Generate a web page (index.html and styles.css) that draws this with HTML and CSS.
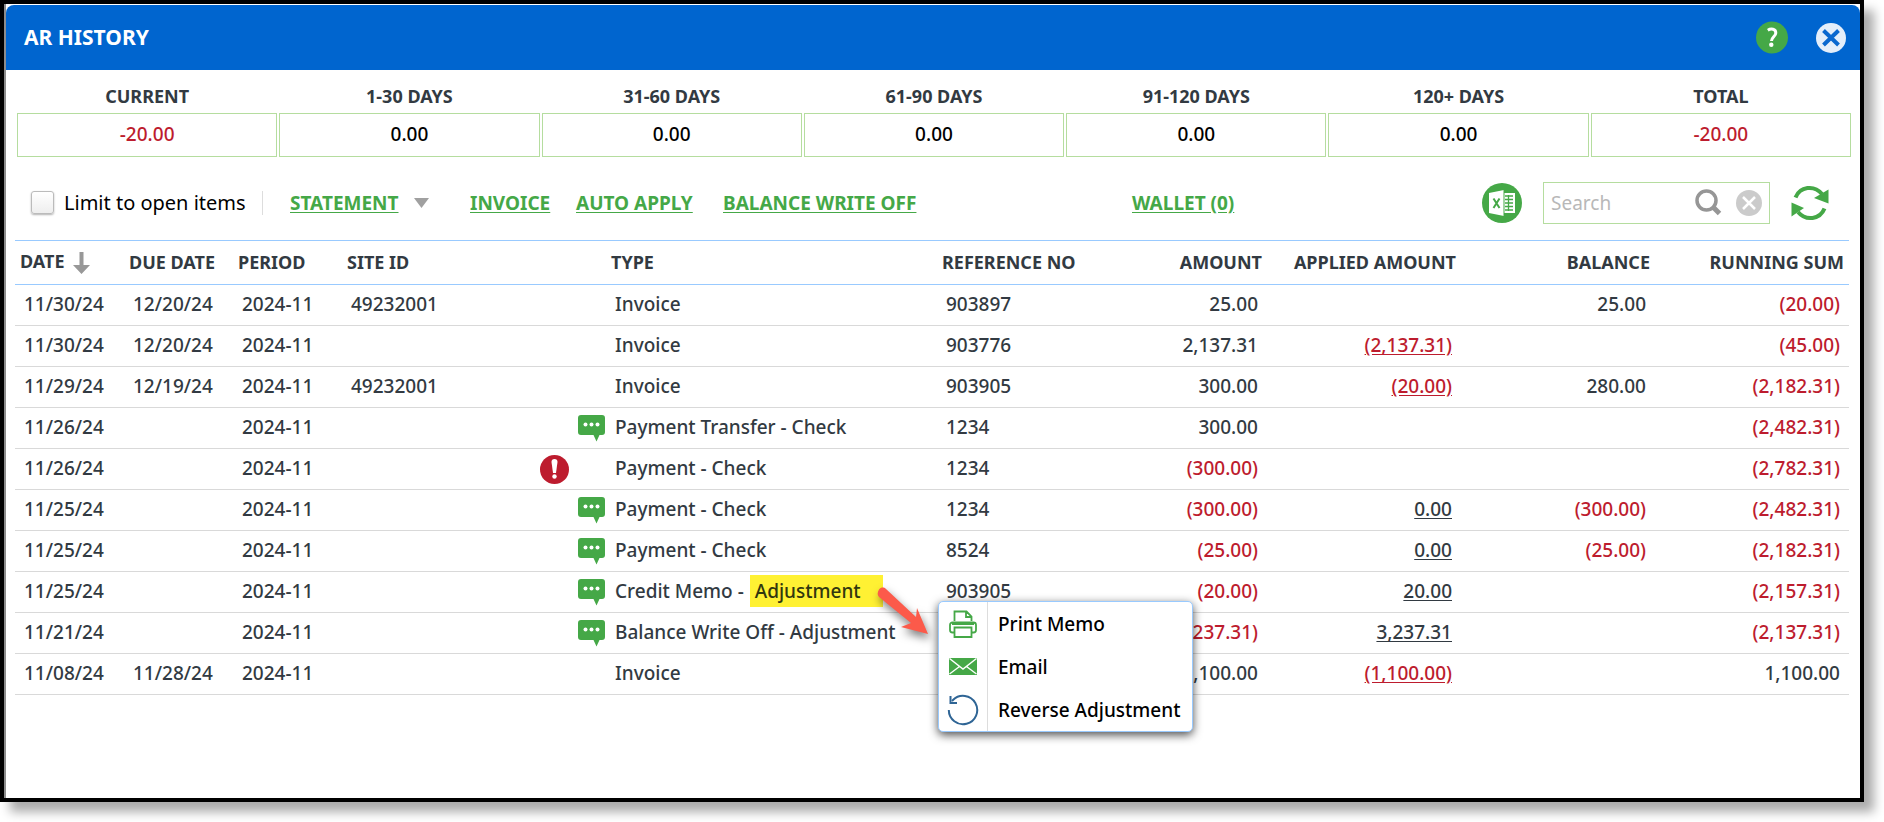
FILE: index.html
```html
<!DOCTYPE html>
<html lang="en">
<head>
  <meta charset="UTF-8" />
  <title>AR History</title>
  <link rel="stylesheet" href="styles.css">
</head>
<body>
  <!-- icons used more than once -->
  <svg class="sprite" aria-hidden="true">
    <symbol id="note" viewBox="0 0 27 27">
      <path fill="#45a847" d="M3 0h21a3 3 0 0 1 3 3v14a3 3 0 0 1-3 3h-2.500l-3 6.500-3-6.500H3a3 3 0 0 1-3-3V3a3 3 0 0 1 3-3z"/>
      <circle cx="7.500" cy="9.500" r="2" fill="#fff"/>
      <circle cx="13.500" cy="9.500" r="2" fill="#fff"/>
      <circle cx="19.500" cy="9.500" r="2" fill="#fff"/>
    </symbol>
  </svg>

  <div class="window">
    <header class="titlebar">
      <h1>AR HISTORY</h1>
      <button type="button" class="icon-btn" aria-label="Help">
        <svg width="32" height="33" viewBox="0 0 32 33">
          <circle cx="16" cy="16.500" r="16" fill="#45a847"/>
          <path d="M11.800 9.200c3.300-2 8-1.300 8 2.700 0 3.500-4.300 4.300-4.300 8" fill="none" stroke="#fff" stroke-width="3"/>
          <circle cx="15.300" cy="23.800" r="2.200" fill="#fff"/>
        </svg>
      </button>
      <button type="button" class="icon-btn" aria-label="Close">
        <svg width="30" height="30" viewBox="0 0 30 30">
          <circle cx="15" cy="15" r="15" fill="#e4eefa"/>
          <path d="M7.500 7.500l15 14.500M22.500 7.500l-15 14.500" stroke="#0a68cf" stroke-width="4"/>
        </svg>
      </button>
    </header>

    <main class="content">
      <dl class="aging">
        <div><dt>CURRENT</dt><dd class="neg">-20.00</dd></div>
        <div><dt>1-30 DAYS</dt><dd>0.00</dd></div>
        <div><dt>31-60 DAYS</dt><dd>0.00</dd></div>
        <div><dt>61-90 DAYS</dt><dd>0.00</dd></div>
        <div><dt>91-120 DAYS</dt><dd>0.00</dd></div>
        <div><dt>120+ DAYS</dt><dd>0.00</dd></div>
        <div><dt>TOTAL</dt><dd class="neg">-20.00</dd></div>
      </dl>

      <div class="toolbar">
        <label class="limit"><input type="checkbox" name="open_items"> Limit to open items</label>
        <div class="statement">
          <a href="#">STATEMENT</a>
          <svg width="15" height="10" viewBox="0 0 15 10"><path fill="#a0a0a0" d="M0 0h15L7.500 10z"/></svg>
        </div>
        <div><a href="#">INVOICE</a></div>
        <div><a href="#">AUTO APPLY</a></div>
        <div><a href="#">BALANCE WRITE OFF</a></div>
        <div><a href="#">WALLET (0)</a></div>
        <div class="tools">
          <button type="button" class="icon-btn" aria-label="Export to Excel">
            <svg width="40" height="40" viewBox="0 0 40 40">
              <circle cx="20" cy="20" r="20" fill="#45a847"/>
              <path fill="#fff" d="M7 10l15-3v26L7 30zM22 10h11v20H22z"/>
              <path d="M11.500 15.500l6 9.500M17.500 15.500l-6 9.500" stroke="#45a847" stroke-width="2"/>
              <path d="M23 13h8M23 16.500h8M23 20h8M23 23.500h8M23 27h8M26.500 12v16" stroke="#45a847" stroke-width="1.300"/>
              <path d="M22 7v26" stroke="#45a847"/>
            </svg>
          </button>
          <div class="search">
            <input type="text" placeholder="Search" aria-label="Search">
            <svg width="27" height="27" viewBox="0 0 27 27">
              <path d="M18 18l6.500 6.500" stroke="#969696" stroke-width="5"/>
              <circle cx="11.500" cy="11.500" r="9.500" fill="none" stroke="#969696" stroke-width="3.500"/>
            </svg>
            <button type="button" class="icon-btn" aria-label="Clear search">
              <svg width="26" height="26" viewBox="0 0 26 26">
                <circle cx="13" cy="13" r="13" fill="#cbcbcb"/>
                <path d="M7 7l12 12M19 7L7 19" stroke="#fff" stroke-width="2.500"/>
              </svg>
            </button>
          </div>
          <button type="button" class="icon-btn" aria-label="Refresh">
            <svg width="38" height="36" viewBox="0 0 38 36">
              <path d="M4.500 12.500C9 1.500 23-.500 31 9" fill="none" stroke="#45a847" stroke-width="4"/>
              <path fill="#45a847" d="M37.500 4.500v14L23 13z"/>
              <path d="M33.500 23.500C29 34.500 15 36.500 7 27" fill="none" stroke="#45a847" stroke-width="4"/>
              <path fill="#45a847" d="M.5 31.500v-14L13 23z"/>
            </svg>
          </button>
        </div>
      </div>

      <table class="history">
        <colgroup>
          <col class="c-date"><col class="c-date"><col class="c-date"><col class="c-site">
          <col class="c-alert"><col class="c-note"><col><col class="c-ref">
          <col class="c-num"><col class="c-num"><col class="c-num"><col class="c-num">
        </colgroup>
        <thead>
          <tr>
            <th>DATE <svg class="sort" width="17" height="22" viewBox="0 0 17 22"><path fill="#989898" d="M6.500 0h4v13H17l-8.500 9L0 13h6.500z"/></svg></th>
            <th>DUE DATE</th><th>PERIOD</th><th>SITE ID</th><th></th><th></th><th>TYPE</th><th>REFERENCE NO</th>
            <th class="num">AMOUNT</th><th class="num">APPLIED AMOUNT</th><th class="num">BALANCE</th><th class="num">RUNNING SUM</th>
          </tr>
        </thead>
        <tbody>
          <tr>
            <td>11/30/24</td><td>12/20/24</td><td>2024-11</td><td>49232001</td><td></td><td></td>
            <td>Invoice</td><td>903897</td>
            <td class="num">25.00</td><td class="num"></td><td class="num">25.00</td><td class="num neg">(20.00)</td>
          </tr>
          <tr>
            <td>11/30/24</td><td>12/20/24</td><td>2024-11</td><td></td><td></td><td></td>
            <td>Invoice</td><td>903776</td>
            <td class="num">2,137.31</td><td class="num neg"><a href="#">(2,137.31)</a></td><td class="num"></td><td class="num neg">(45.00)</td>
          </tr>
          <tr>
            <td>11/29/24</td><td>12/19/24</td><td>2024-11</td><td>49232001</td><td></td><td></td>
            <td>Invoice</td><td>903905</td>
            <td class="num">300.00</td><td class="num neg"><a href="#">(20.00)</a></td><td class="num">280.00</td><td class="num neg">(2,182.31)</td>
          </tr>
          <tr>
            <td>11/26/24</td><td></td><td>2024-11</td><td></td><td></td>
            <td class="icon"><svg width="27" height="27"><use href="#note"/></svg></td>
            <td>Payment Transfer - Check</td><td>1234</td>
            <td class="num">300.00</td><td class="num"></td><td class="num"></td><td class="num neg">(2,482.31)</td>
          </tr>
          <tr>
            <td>11/26/24</td><td></td><td>2024-11</td><td></td>
            <td class="icon">
              <svg width="29" height="29" viewBox="0 0 29 29">
                <circle cx="14.500" cy="14.500" r="14.500" fill="#bd1c2e"/>
                <path fill="#fff" d="M11.500 7a3 3 0 0 1 6 0l-1.500 11h-3z"/>
                <circle cx="14.500" cy="21.500" r="2.200" fill="#fff"/>
              </svg>
            </td>
            <td></td>
            <td>Payment - Check</td><td>1234</td>
            <td class="num neg">(300.00)</td><td class="num"></td><td class="num"></td><td class="num neg">(2,782.31)</td>
          </tr>
          <tr>
            <td>11/25/24</td><td></td><td>2024-11</td><td></td><td></td>
            <td class="icon"><svg width="27" height="27"><use href="#note"/></svg></td>
            <td>Payment - Check</td><td>1234</td>
            <td class="num neg">(300.00)</td><td class="num"><a href="#">0.00</a></td><td class="num neg">(300.00)</td><td class="num neg">(2,482.31)</td>
          </tr>
          <tr>
            <td>11/25/24</td><td></td><td>2024-11</td><td></td><td></td>
            <td class="icon"><svg width="27" height="27"><use href="#note"/></svg></td>
            <td>Payment - Check</td><td>8524</td>
            <td class="num neg">(25.00)</td><td class="num"><a href="#">0.00</a></td><td class="num neg">(25.00)</td><td class="num neg">(2,182.31)</td>
          </tr>
          <tr>
            <td>11/25/24</td><td></td><td>2024-11</td><td></td><td></td>
            <td class="icon"><svg width="27" height="27"><use href="#note"/></svg></td>
            <td>Credit Memo -<mark>Adjustment</mark></td>
            <td class="anchor">903905
              <svg class="arrow" width="62" height="62" viewBox="0 0 62 62">
                <path fill="#fc5a4a" d="M8 17c-2-2-1.500-5 0-7.500 2-2.500 5-2.500 7-.5l30 28 1-9 11 26-27-7 10-4z"/>
              </svg>
              <ul class="menu">
                <li><button type="button">
                  <span class="menu-icon">
                    <svg width="28" height="28" viewBox="0 0 28 28" fill="none" stroke="#45a847" stroke-width="1.800">
                      <path d="M5.500 11V1.500h12l5 5V11M17 1.500V7h5.500"/>
                      <path d="M5 22.500H3.500a2.500 2.500 0 0 1-2.500-2.500v-5a2.500 2.500 0 0 1 2.500-2.500h21a2.500 2.500 0 0 1 2.500 2.500v5a2.500 2.500 0 0 1-2.500 2.500H23"/>
                      <path d="M3 13.500h22" stroke-width="3"/>
                      <path d="M5.500 17.500h17v9.500h-17z"/>
                    </svg>
                  </span>Print Memo</button></li>
                <li><button type="button">
                  <span class="menu-icon">
                    <svg width="28" height="17" viewBox="0 0 28 17">
                      <path fill="#45a847" d="M0 0h28v17H0z"/>
                      <path d="M.5.5L14 11 27.500.5M.5 16l10-7.500M27.500 16l-10-7.500" fill="none" stroke="#fff" stroke-width="1.400"/>
                    </svg>
                  </span>Email</button></li>
                <li><button type="button">
                  <span class="menu-icon">
                    <svg width="32" height="32" viewBox="0 0 32 32" fill="none" stroke="#2f6595" stroke-width="2">
                      <path d="M1.800 16A14.200 14.200 0 1 0 6 6l-1 1"/>
                      <path d="M3.500 2v7H10"/>
                    </svg>
                  </span>Reverse Adjustment</button></li>
              </ul>
            </td>
            <td class="num neg">(20.00)</td><td class="num"><a href="#">20.00</a></td><td class="num"></td><td class="num neg">(2,157.31)</td>
          </tr>
          <tr>
            <td>11/21/24</td><td></td><td>2024-11</td><td></td><td></td>
            <td class="icon"><svg width="27" height="27"><use href="#note"/></svg></td>
            <td>Balance Write Off - Adjustment</td><td></td>
            <td class="num neg">(3,237.31)</td><td class="num"><a href="#">3,237.31</a></td><td class="num"></td><td class="num neg">(2,137.31)</td>
          </tr>
          <tr>
            <td>11/08/24</td><td>11/28/24</td><td>2024-11</td><td></td><td></td><td></td>
            <td>Invoice</td><td></td>
            <td class="num">1,100.00</td><td class="num neg"><a href="#">(1,100.00)</a></td><td class="num"></td><td class="num">1,100.00</td>
          </tr>
        </tbody>
      </table>
    </main>
  </div>
</body>
</html>
```
FILE: styles.css
```css
* { box-sizing: border-box; }
body {
  margin: 0;
  background: #fff;
  font-family: "Noto Sans", "Open Sans", sans-serif;
  font-size: 19px;
  line-height: 24px;
  color: #323a42;
}
svg { display: block; }
.sprite { position: absolute; width: 0; height: 0; }
.neg { color: #bd1c2e; }
.icon-btn { background: none; border: none; padding: 0; cursor: pointer; }

/* window */
.window {
  min-height: calc(100vh - 20px);
  margin: 0 20px 20px 0;
  border: 4px solid #000;
  background: linear-gradient(to right, #8c8c8c 2px, #fff 2px);
  box-shadow: 10px 10px 10px rgba(0, 0, 0, 0.33);
}
.titlebar {
  display: flex;
  align-items: center;
  gap: 28px;
  height: 65px;
  margin: 1px 0 0 2px;
  padding: 0 14px 0 18px;
  background: #0065cf;
  border-radius: 8px 8px 0 0;
}
.titlebar h1 {
  flex: 1;
  margin: 0;
  padding-bottom: 2px;
  font-size: 21px;
  color: #fff;
}
.content { padding: 14px 9px 40px 11px; }

/* aging buckets */
.aging {
  display: grid;
  grid-template-columns: repeat(7, 1fr);
  gap: 2px;
  margin: 0 0 0 2px;
  text-align: center;
}
.aging dt {
  padding-bottom: 5px;
  font-size: 18px;
  font-weight: 700;
}
.aging dd {
  height: 44px;
  margin: 0;
  border: 1px solid #b5dd9f;
  line-height: 40px;
  font-weight: 500;
  color: #000;
}
.aging dd.neg { color: #bd1c2e; }

/* toolbar */
.toolbar {
  display: grid;
  grid-template-columns: 247px 208px 106px 147px 409px 1fr auto;
  align-items: center;
  height: 83px;
  padding-top: 8px;
}
.toolbar a {
  font-weight: 700;
  color: #45a847;
  text-underline-offset: 2px;
}
.limit {
  display: flex;
  align-items: center;
  gap: 10px;
  padding-left: 16px;
  font-size: 20px;
  color: #000;
}
.limit input {
  appearance: none;
  width: 23px;
  height: 23px;
  margin: 0;
  border: 1px solid #bbb;
  border-radius: 3px;
  background: linear-gradient(#fff, #eee);
  box-shadow: 0 1px 2px rgba(0, 0, 0, 0.3);
}
.statement {
  display: flex;
  align-items: center;
  gap: 15px;
  padding-left: 27px;
  border-left: 1px solid #ddd;
}
.tools {
  display: flex;
  align-items: center;
  gap: 21px;
  padding-right: 22px;
}
.search {
  display: flex;
  align-items: center;
  gap: 14px;
  width: 227px;
  height: 42px;
  padding: 0 7px;
  border: 1px solid #b5dd9f;
}
.search input {
  flex: 1;
  min-width: 0;
  padding: 0;
  border: none;
  outline: none;
  font: inherit;
}
.search input::placeholder { color: #b8b8b8; }

/* history table */
.history {
  width: calc(100% - 2px);
  table-layout: fixed;
  border-collapse: collapse;
}
.c-date { width: 109px; }
.c-site { width: 192px; }
.c-alert { width: 38px; }
.c-note { width: 34px; }
.c-ref { width: 136px; }
.c-num { width: 194px; }
.history th {
  height: 44px;
  padding: 0 5px 2px;
  border-top: 1px solid #99caff;
  border-bottom: 1px solid #99caff;
  font-size: 18px;
  text-align: left;
  white-space: nowrap;
}
.history td {
  height: 41px;
  padding: 0 9px 2px;
  border-bottom: 1px solid #d9d9d9;
  font-weight: 500;
  white-space: nowrap;
}
.history .num { text-align: right; }
.history td.icon { padding: 0 6px; }
.history td a { color: inherit; text-underline-offset: 2px; }
.sort { display: inline-block; margin-left: 4px; vertical-align: middle; }
mark {
  display: inline-block;
  margin-left: 6px;
  padding: 0 22px 0 5px;
  background: #fff133;
  line-height: 32px;
  color: #32370f;
}

/* row menu */
.anchor { position: relative; }
.arrow {
  position: absolute;
  top: 8px;
  left: -66px;
  filter: drop-shadow(2px 5px 4px rgba(0, 0, 0, 0.5));
}
.menu {
  position: absolute;
  top: 29px;
  left: 1px;
  z-index: 1;
  width: 255px;
  margin: 0;
  padding: 0;
  border: 1px solid #99caff;
  border-radius: 5px;
  background: #fff;
  box-shadow: 0 3px 10px rgba(0, 0, 0, 0.7);
  list-style: none;
}
.menu button {
  display: flex;
  align-items: center;
  width: 100%;
  height: 43px;
  padding: 0;
  border: none;
  background: none;
  font: inherit;
  color: #000;
}
.menu-icon {
  display: flex;
  align-items: center;
  justify-content: center;
  width: 49px;
  height: 43px;
  margin-right: 10px;
  border-right: 1px solid #ddd;
}
```
